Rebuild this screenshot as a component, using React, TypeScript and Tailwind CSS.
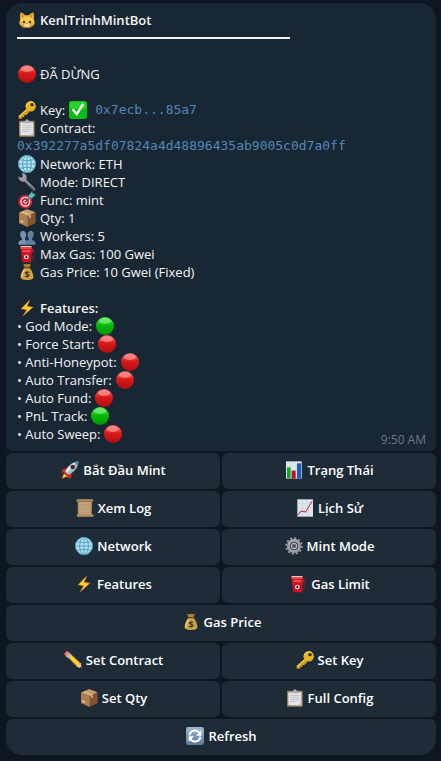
import React, { FC, ReactNode } from "react";

type IconProps = {
  children: ReactNode;
};

const Icon: FC<IconProps> = ({ children }) => {
  return (
    <svg viewBox="0 0 54 54" className="ml-px size-[18px] shrink-0" aria-hidden="true">
      {children}
    </svg>
  );
};

const Cat = () => (
  <Icon>
    <defs>
      <linearGradient id="cat" x1="0" y1="0" x2="0" y2="1">
        <stop offset="0" stopColor="#e9a92c" />
        <stop offset="0.5" stopColor="#f6cf4c" />
        <stop offset="1" stopColor="#d9942a" />
      </linearGradient>
    </defs>
    <path d="M8 4c5 1 10 5 13 9h12c3-4 8-8 13-9 2 6 2 13 1 19l3 13c0 7-8 10-13 14H17C12 46 4 43 4 36l3-13C6 17 6 10 8 4z" fill="url(#cat)" />
    <path d="M11 9c3 2 6 5 7 8l-5 4c-2-4-3-8-2-12zM43 9c-3 2-6 5-7 8l5 4c2-4 3-8 2-12z" fill="#d08a2c" />
    <ellipse cx="18" cy="33" rx="3" ry="4" fill="#33260f" />
    <ellipse cx="36" cy="33" rx="3" ry="4" fill="#33260f" />
    <ellipse cx="27" cy="42" rx="8" ry="6" fill="#fae9b0" />
    <path d="M24 37h6l-3 4z" fill="#b0525a" />
  </Icon>
);

const RedBall = () => (
  <Icon>
    <defs>
      <linearGradient id="red" x1="0" y1="0" x2="0" y2="1">
        <stop offset="0" stopColor="#f25f5f" />
        <stop offset="0.3" stopColor="#ef3c3c" />
        <stop offset="0.45" stopColor="#d91a1a" />
        <stop offset="1" stopColor="#b50e0e" />
      </linearGradient>
    </defs>
    <circle cx="27" cy="27" r="27" fill="url(#red)" />
    <ellipse cx="27" cy="12" rx="18" ry="9" fill="#fff" opacity="0.32" />
  </Icon>
);

const GreenBall = () => (
  <Icon>
    <defs>
      <linearGradient id="green" x1="0" y1="0" x2="0" y2="1">
        <stop offset="0" stopColor="#3fe83f" />
        <stop offset="0.3" stopColor="#1fd51f" />
        <stop offset="0.45" stopColor="#06bb06" />
        <stop offset="1" stopColor="#009600" />
      </linearGradient>
    </defs>
    <circle cx="27" cy="27" r="27" fill="url(#green)" />
    <ellipse cx="27" cy="12" rx="18" ry="9" fill="#fff" opacity="0.3" />
  </Icon>
);

const Key = () => (
  <Icon>
    <path d="M28 22 2 46v7h9l3-5h4l2-6h5l9-9z" fill="#d39a1c" />
    <path d="M29 23 3 47" stroke="#f5cf45" strokeWidth="4" />
    <circle cx="38" cy="16" r="15.500" fill="#e9b61f" />
    <path d="M25 13a14 14 0 0 1 25-5" stroke="#fbe069" strokeWidth="3" fill="none" />
    <circle cx="42" cy="11" r="5" fill="#2b2a20" />
  </Icon>
);

const Check = () => (
  <Icon>
    <rect width="54" height="54" rx="7" fill="#08bd12" />
    <rect x="2" y="2" width="50" height="22" rx="5" fill="#27d42f" />
    <path d="m13 27 10 13L41 11" stroke="#fff" strokeWidth="7" fill="none" strokeLinecap="round" strokeLinejoin="round" />
  </Icon>
);

const Clipboard = () => (
  <Icon>
    <rect x="3" y="5" width="47" height="48" rx="3" fill="#9d7c58" />
    <path d="M7 10h39v39H7z" fill="#e6e6e9" />
    <path d="M12 20h29M12 26h29M12 32h29M12 38h20" stroke="#b9bac0" strokeWidth="2.500" />
    <path d="M15 13V7h7c0-8 10-8 10 0h7v6z" fill="#a9adb4" />
    <path d="M36 49h10V39z" fill="#c5c5cb" />
  </Icon>
);

const Globe = () => (
  <Icon>
    <circle cx="27" cy="27" r="26" fill="#c1dfe8" />
    <g fill="none" stroke="#4ba5c7" strokeWidth="3">
      <circle cx="27" cy="27" r="25.500" />
      <ellipse cx="27" cy="27" rx="13" ry="25" />
      <path d="M27 2v50M2 27h50M6 14q21 7 42 0M6 40q21-7 42 0" />
    </g>
    <path d="M5 20A24 24 0 0 1 27 3" stroke="#7bcbe3" strokeWidth="3" fill="none" />
  </Icon>
);

const Wrench = () => (
  <Icon>
    <path d="M20 21 48 49" stroke="#77777e" strokeWidth="8" strokeLinecap="round" />
    <path d="M20 19 49 46" stroke="#b4b4bb" strokeWidth="3" />
    <path d="M1 10c4 4 8 5 11 3 3-3 2-7-1-12 9-1 16 5 15 13l-1 7-7 5C8 27 0 20 1 10z" fill="#9b9ba3" />
    <path d="M38 39l10 10" stroke="#56434a" strokeWidth="3" />
  </Icon>
);

const Target = () => (
  <Icon>
    <circle cx="22" cy="32" r="21" fill="#cf2333" />
    <circle cx="22" cy="32" r="15" fill="#f2e7e7" />
    <circle cx="22" cy="32" r="11" fill="#cf2333" />
    <circle cx="22" cy="32" r="6" fill="#f2e7e7" />
    <circle cx="22" cy="32" r="3" fill="#cf2333" />
    <path d="M22 32 42 14" stroke="#2c5f6b" strokeWidth="4" />
    <path d="m32 12 11-11 1 8 10 2-11 10-11 2z" fill="#43b8bd" />
    <path d="m36 18 12-11" stroke="#a5e5e3" strokeWidth="2" />
  </Icon>
);

const Package = () => (
  <Icon>
    <path d="M27 1 52 10v32L27 53 3 42V11z" fill="#9a6d42" />
    <path d="m3 11 24-10 25 9-23 11z" fill="#c99c6c" />
    <path d="m3 11 26 10v32L3 42z" fill="#ad7e50" />
    <path d="M29 21 52 10v32L29 53z" fill="#80552f" />
    <path d="m13 7 25 10v9l-5 2v-9L8 9z" fill="#e3c8a0" opacity="0.85" />
    <path d="M7 34l9 3v5l-9-3z" fill="#e0cbb0" />
  </Icon>
);

const Users = () => (
  <Icon>
    <path d="M1 53c0-9 3-11 9-13 3-1 3-3 1-6C5 27 4 13 14 12s13 10 8 21c-2 4-1 6 2 7l4 2v11z" fill="#7592ae" />
    <path d="M53 53c0-9-3-11-9-13-3-1-3-3-1-6 6-7 7-21-3-22s-14 9-9 21c2 4 1 6-2 7-5 2-7 6-7 13z" fill="#5e7f9f" />
    <path d="M3 50c0-5 2-7 7-9M34 17c1-3 4-4 7-3" stroke="#9cb4c9" strokeWidth="2" fill="none" />
  </Icon>
);

const Fuel = () => (
  <Icon>
    <path d="M39 13c9-1 9 3 8 10l-2 20q-3 6-7 2" fill="none" stroke="#41333a" strokeWidth="4" />
    <path d="M6 3h36l-1 9H8z" fill="#db4f54" />
    <path d="M9 3h30v3H9z" fill="#f1c6c6" />
    <path d="M8 12h34l5 5-6 9-2 26H13z" fill="#cf1222" />
    <path d="M13 15h25l-2 7H14z" fill="#ef4851" />
    <circle cx="25" cy="36" r="7" fill="#f5e8e8" />
    <path d="M25 30q7 10 0 10t0-10z" fill="#252026" />
  </Icon>
);

const MoneyBag = () => (
  <Icon>
    <path d="m15 2 6 2 6-2 6 2 6-2-6 14H21z" fill="#a88137" />
    <path d="M21 14h13c7 7 13 20 12 30-1 9-37 9-38 0-1-10 6-23 13-30z" fill="#cda247" />
    <path d="M20 18c-5 7-9 15-8 25" stroke="#edcf7a" strokeWidth="4" fill="none" />
    <path d="M18 14h18" stroke="#73411d" strokeWidth="4" strokeLinecap="round" />
    <text x="27" y="44" textAnchor="middle" fontFamily="Open Sans, sans-serif" fontWeight="700" fontSize="27" fill="#3d3015">
      $
    </text>
  </Icon>
);

const Bolt = () => (
  <Icon>
    <path d="M37 1 8 30l17 3-12 20 33-29-18-3z" fill="#f29b1d" />
    <path d="M34 6 13 28l17 3-11 16 22-21-18-3z" fill="#ffd83b" />
  </Icon>
);

const Rocket = () => (
  <Icon>
    <path d="M18 21 4 25l-3 12 15-6zM33 36l-3 15-11 2 5-15z" fill="#cc2928" />
    <path d="M10 34 2 53l20-7z" fill="#f7931f" />
    <path d="m12 37-6 11 12-4z" fill="#ffe04d" />
    <path d="M11 34C19 16 33 3 52 1c1 18-12 32-32 42z" fill="#a9bbc9" />
    <path d="M14 31C22 17 34 7 47 3L18 36z" fill="#e2ebf0" />
    <path d="m40 4 12-3-2 13z" fill="#5484a9" />
    <circle cx="35" cy="18" r="7" fill="#6e1f2b" />
    <circle cx="35" cy="18" r="4" fill="#1e3448" />
    <path d="m12 32 10 10-5 4-9-9z" fill="#c32528" />
  </Icon>
);

const Scroll = () => (
  <Icon>
    <path d="M5 7h43l-1 40H6z" fill="#b5946b" />
    <path d="M11 10h32v37H11z" fill="#c5a67e" />
    <path d="M13 17h28M13 23h28M13 29h28M13 35h28M13 41h28" stroke="#b39269" strokeWidth="2" />
    <rect x="1" y="1" width="51" height="8" rx="3" fill="#977249" />
    <rect x="2" y="46" width="51" height="8" rx="3" fill="#9f7b50" />
    <path d="M4 3h45M5 48h45" stroke="#d5b689" strokeWidth="2" />
  </Icon>
);

const BarChart = () => (
  <Icon>
    <path d="M3 1h47v52H3z" fill="#dde6ec" />
    <path d="M3 14h47M3 27h47M3 40h47M18 1v52M34 1v52" stroke="#bdcbd5" strokeWidth="1" />
    <path d="M6 19h11v34H6z" fill="#0cae22" />
    <path d="M20 29h12v24H20z" fill="#bd111d" />
    <path d="M36 7h12v46H36z" fill="#1262bd" />
  </Icon>
);

const LineChart = () => (
  <Icon>
    <path d="M4 1h47v52H4z" fill="#dde4eb" />
    <path d="M4 14h47M4 27h47M4 40h47M19 1v52M35 1v52" stroke="#bdcad4" strokeWidth="1" />
    <path d="m6 48 9-12 14 3L48 7" stroke="#c4202b" strokeWidth="3" fill="none" strokeLinejoin="round" />
  </Icon>
);

const Gear = () => (
  <Icon>
    <circle cx="27" cy="27" r="23.500" fill="none" stroke="#9d9fa3" strokeWidth="5" strokeDasharray="6.200 6.100" />
    <circle cx="27" cy="27" r="16.500" fill="none" stroke="#9d9fa3" strokeWidth="9" />
    <circle cx="27" cy="27" r="11" fill="#5a6066" />
    <circle cx="27" cy="27" r="8" fill="none" stroke="#bec0c3" strokeWidth="3" />
    <circle cx="27" cy="27" r="4" fill="#47515b" />
    <path d="M10 20a18 18 0 0 1 29-7" stroke="#c3c5c7" strokeWidth="2" fill="none" />
  </Icon>
);

const Pencil = () => (
  <Icon>
    <path d="m2 9 9-8 39 36 3 15-14-5z" fill="#edb21d" />
    <path d="m14 12 31 29" stroke="#ffe04f" strokeWidth="5" />
    <path d="m38 47 12-11 3 16z" fill="#e7c79a" />
    <path d="m47 50 5-5 1 7z" fill="#33302d" />
    <path d="M2 11C0 4 7-1 13 3l4 4L6 16z" fill="#e8747d" />
    <path d="m6 16 11-9 6 5-11 10z" fill="#b6bdc3" />
  </Icon>
);

const Refresh = () => (
  <Icon>
    <defs>
      <linearGradient id="refresh" x1="0" y1="0" x2="0" y2="1">
        <stop offset="0" stopColor="#9dbbd3" />
        <stop offset="1" stopColor="#58799a" />
      </linearGradient>
    </defs>
    <rect width="54" height="54" rx="7" fill="url(#refresh)" />
    <path d="M11 25c1-15 20-20 29-8M43 29c-1 15-20 20-29 8" stroke="#fff" strokeWidth="6" fill="none" />
    <path d="M46 9v17H30zM8 45V28h16z" fill="#fff" />
  </Icon>
);

const details = [
  { icon: <Globe />, text: "Network: ETH" },
  { icon: <Wrench />, text: "Mode: DIRECT" },
  { icon: <Target />, text: "Func: mint" },
  { icon: <Package />, text: "Qty: 1" },
  { icon: <Users />, text: "Workers: 5" },
  { icon: <Fuel />, text: "Max Gas: 100 Gwei" },
  { icon: <MoneyBag />, text: "Gas Price: 10 Gwei (Fixed)" },
];

const features = [
  { name: "God Mode", on: true },
  { name: "Force Start", on: false },
  { name: "Anti-Honeypot", on: false },
  { name: "Auto Transfer", on: false },
  { name: "Auto Fund", on: false },
  { name: "PnL Track", on: true },
  { name: "Auto Sweep", on: false },
];

const buttons = [
  { icon: <Rocket />, text: "Bắt Đầu Mint" },
  { icon: <BarChart />, text: "Trạng Thái" },
  { icon: <Scroll />, text: "Xem Log" },
  { icon: <LineChart />, text: "Lịch Sử" },
  { icon: <Globe />, text: "Network" },
  { icon: <Gear />, text: "Mint Mode" },
  { icon: <Bolt />, text: "Features" },
  { icon: <Fuel />, text: "Gas Limit" },
  { icon: <MoneyBag />, text: "Gas Price", wide: true },
  { icon: <Pencil />, text: "Set Contract" },
  { icon: <Key />, text: "Set Key" },
  { icon: <Package />, text: "Set Qty" },
  { icon: <Clipboard />, text: "Full Config" },
  { icon: <Refresh />, text: "Refresh", wide: true },
];

type LineProps = {
  icon?: ReactNode;
  children: ReactNode;
};

const Line: FC<LineProps> = ({ icon, children }) => {
  return (
    <div className="flex items-center gap-1">
      {icon}
      {children}
    </div>
  );
};

const App = () => {
  return (
    <main className="min-h-screen bg-[#0e1621] pt-[3px] pr-[5px] pb-[6px] pl-[6px] font-['Open_Sans',sans-serif] text-[13px] leading-[18px] text-[#f5f5f5]">
      <div className="flex items-end justify-between rounded-t-2xl rounded-b-md bg-[#192633] pr-[10px] pl-[11px]">
        <div className="min-w-0 pt-2 pb-2">
          <Line icon={<Cat />}>
            <h1 className="font-semibold">KenlTrinhMintBot</h1>
          </Line>
          <div className="flex h-[18px] items-center">
            <hr className="w-[273px] border-t-2 border-[#f5f5f5]" />
          </div>

          <div className="mt-[18px]">
            <Line icon={<RedBall />}>ĐÃ DỪNG</Line>
          </div>

          <div className="mt-[18px]">
            <Line icon={<Key />}>
              <div className="flex items-center gap-[3px]">
                <span>Key:</span>
                <Check />
              </div>
              <code className="ml-1 font-['DejaVu_Sans_Mono',monospace] text-[#5288b8]">0x7ecb...85a7</code>
            </Line>
            <Line icon={<Clipboard />}>Contract:</Line>
            <code className="block font-['DejaVu_Sans_Mono',monospace] break-all text-[#5288b8]">
              0x392277a5df07824a4d48896435ab9005c0d7a0ff
            </code>
            {details.map((item) => (
              <Line key={item.text} icon={item.icon}>
                {item.text}
              </Line>
            ))}
          </div>

          <div className="mt-[18px]">
            <Line icon={<Bolt />}>
              <h2 className="font-semibold">Features:</h2>
            </Line>
            <ul>
              {features.map((item) => (
                <li key={item.name} className="flex items-center gap-[3px]">
                  <span>• {item.name}:</span>
                  {item.on ? <GreenBall /> : <RedBall />}
                </li>
              ))}
            </ul>
          </div>
        </div>
        <time className="shrink-0 pb-[2px] text-xs leading-[18px] text-[#6d7a87]">9:50 AM</time>
      </div>

      <div className="mt-[2px] grid grid-cols-2 gap-[2px]">
        {buttons.map((item) => (
          <button
            key={item.text}
            type="button"
            className={`flex h-9 items-center justify-center gap-1 rounded-md bg-[#1f2c38] pb-[2px] font-semibold text-white last:rounded-b-2xl ${
              item.wide ? "col-span-2" : ""
            }`}
          >
            {item.icon}
            {item.text}
          </button>
        ))}
      </div>
    </main>
  );
};

export default App;
